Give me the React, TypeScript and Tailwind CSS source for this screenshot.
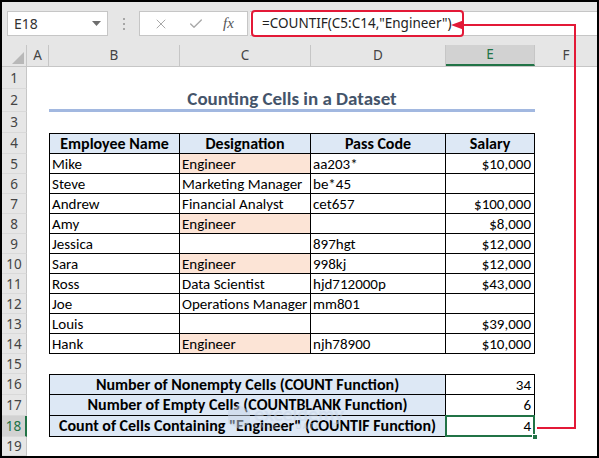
import { X, Check } from 'lucide-react'

type Row = { n: number; h: string; cells?: React.ReactNode }

const cellFont = "font-['Carlito','Lato',sans-serif]"

const people = [
  ['Mike', 'Engineer', 'aa203*', '$10,000'],
  ['Steve', 'Marketing Manager', 'be*45', ''],
  ['Andrew', 'Financial Analyst', 'cet657', '$100,000'],
  ['Amy', 'Engineer', '', '$8,000'],
  ['Jessica', '', '897hgt', '$12,000'],
  ['Sara', 'Engineer', '998kj', '$12,000'],
  ['Ross', 'Data Scientist', 'hjd712000p', '$43,000'],
  ['Joe', 'Operations Manager', 'mm801', ''],
  ['Louis', '', '', '$39,000'],
  ['Hank', 'Engineer', 'njh78900', '$10,000'],
]

const summary = [
  ['Number of Nonempty Cells (COUNT Function)', '34'],
  ['Number of Empty Cells (COUNTBLANK Function)', '6'],
  ['Count of Cells Containing "Engineer" (COUNTIF Function)', '4'],
]

function RowHead({ n, active }: { n: number; active?: boolean }) {
  return (
    <div
      className={`w-[25px] shrink-0 flex items-center justify-center border-b border-b-[#d9d9d9] text-[13.5px] leading-[16px] font-['Noto_Sans',sans-serif] ${
        active
          ? 'bg-[#d2d2d2] text-[#217346] border-r-2 border-r-[#217346]'
          : 'bg-[#e6e6e6] text-[#444] border-r border-r-[#c6c6c6]'
      }`}
    >
      {n}
    </div>
  )
}

function ColHead({ label, w, active }: { label: string; w: string; active?: boolean }) {
  return (
    <div
      className={`${w} shrink-0 flex items-center justify-center border-r border-[#c6c6c6] text-[13.5px] font-['Noto_Sans',sans-serif] ${
        active ? 'bg-[#d2d2d2] text-[#217346] border-b-2 border-b-[#217346]' : 'text-[#444]'
      }`}
    >
      {label}
    </div>
  )
}

export default function App() {
  const rows: Row[] = []

  rows.push({ n: 1, h: 'h-[22px]' })
  rows.push({
    n: 2,
    h: 'h-[23px]',
    cells: (
      <>
        <div className="w-[22px] shrink-0" />
        <div className={`w-[486px] shrink-0 flex items-end justify-center border-b-[3px] border-[#a2b8e0] text-[19px] leading-[20px] font-bold text-[#44546a] ${cellFont}`}>
          Counting Cells in a Dataset
        </div>
      </>
    ),
  })
  rows.push({ n: 3, h: 'h-[21px]' })
  rows.push({
    n: 4,
    h: 'h-[21px]',
    cells: (
      <>
        <div className="w-[22px] shrink-0" />
        {[
          ['Employee Name', 'w-[131px] border-l'],
          ['Designation', 'w-[131px]'],
          ['Pass Code', 'w-[135px]'],
          ['Salary', 'w-[89px]'],
        ].map(([t, w]) => (
          <div
            key={t}
            className={`${w} shrink-0 flex items-center justify-center border-t border-r border-b border-black bg-[#dde8f5] text-[16px] leading-[18px] font-bold text-black ${cellFont}`}
          >
            {t}
          </div>
        ))}
      </>
    ),
  })

  people.forEach((p, i) => {
    rows.push({
      n: 5 + i,
      h: 'h-[20px]',
      cells: (
        <>
          <div className="w-[22px] shrink-0" />
          <div className="w-[131px] shrink-0 flex items-center px-[2px] border-l border-r border-b border-black overflow-hidden whitespace-nowrap">{p[0]}</div>
          <div className={`w-[131px] shrink-0 flex items-center px-[2px] border-r border-b border-black overflow-hidden whitespace-nowrap ${p[1] === 'Engineer' ? 'bg-[#fce4d6]' : ''}`}>{p[1]}</div>
          <div className="w-[135px] shrink-0 flex items-center px-[2px] border-r border-b border-black overflow-hidden whitespace-nowrap">{p[2]}</div>
          <div className="w-[89px] shrink-0 flex items-center justify-end px-[3px] border-r border-b border-black overflow-hidden whitespace-nowrap">{p[3]}</div>
        </>
      ),
    })
  })

  rows.push({ n: 15, h: 'h-[20px]' })

  summary.forEach((s, i) => {
    rows.push({
      n: 16 + i,
      h: 'h-[21px]',
      cells: (
        <>
          <div className="w-[22px] shrink-0" />
          <div className={`w-[397px] shrink-0 flex items-center justify-center border-l border-r border-b border-black bg-[#dde8f5] text-[16px] font-bold whitespace-nowrap ${i === 0 ? 'border-t' : ''}`}>
            {s[0]}
          </div>
          <div className={`relative w-[89px] shrink-0 flex items-center justify-end px-[3px] border-r border-b border-black ${i === 0 ? 'border-t' : ''}`}>
            {s[1]}
            {i === 2 && (
              <>
                <div className="absolute -left-px -top-px w-[90px] h-[22px] border-2 border-[#217346]" />
                <div className="absolute -right-[4px] -bottom-[4px] w-[6px] h-[6px] bg-[#217346] border border-white" />
              </>
            )}
          </div>
        </>
      ),
    })
  })

  rows.push({ n: 19, h: 'h-[19px]' })

  return (
    <div className="relative w-[599px] h-[458px] bg-black p-[2px] overflow-hidden">
      <div className="w-full h-full flex flex-col bg-white">
        {/* Toolbar */}
        <div className="h-[43px] shrink-0 flex items-center bg-[#e6e6e6] pl-[5px] font-['Noto_Sans',sans-serif]">
          <div className="w-[101px] h-[25px] flex items-center justify-between bg-white border border-[#c6c6c6] pl-[6px] pr-[6px] text-[14px] text-[#333]">
            <span>E18</span>
            <svg width="9" height="5" viewBox="0 0 9 5">
              <path d="M0 0 H9 L4.5 5 Z" fill="#6e6e6e" />
            </svg>
          </div>
          <div className="w-[31px] flex flex-col items-center gap-[3px]">
            <span className="w-[2px] h-[2px] bg-[#a6a6a6]" />
            <span className="w-[2px] h-[2px] bg-[#a6a6a6]" />
            <span className="w-[2px] h-[2px] bg-[#a6a6a6]" />
          </div>
          <div className="w-[109px] h-[25px] flex items-center bg-white border border-[#c6c6c6] text-[#a8a8a8]">
            <X size={16} strokeWidth={1.5} className="ml-[13px]" />
            <Check size={16} strokeWidth={2} className="ml-[19px]" />
            <span className="ml-[19px] text-[15px] italic font-['Liberation_Serif',serif] text-[#555]">fx</span>
          </div>
          <div className="flex-1 h-[25px] ml-[2px] flex items-center bg-white border-y border-[#c6c6c6]">
            <div className="h-[27px] w-[213px] ml-[1px] flex items-center rounded-[4px] border-2 border-[#e31937] pl-[9px] text-[13.5px] text-[#222] whitespace-nowrap">
              =COUNTIF(C5:C14,"Engineer")
            </div>
          </div>
        </div>

        {/* Column headers */}
        <div className="h-[22px] shrink-0 flex bg-[#e6e6e6] border-b border-[#c6c6c6]">
          <div className="w-[25px] shrink-0 relative border-r border-[#c6c6c6]">
            <svg className="absolute right-[2px] bottom-[2px]" width="12" height="12" viewBox="0 0 12 12">
              <path d="M12 0 V12 H0 Z" fill="#b8b8b8" />
            </svg>
          </div>
          <ColHead label="A" w="w-[22px]" />
          <ColHead label="B" w="w-[131px]" />
          <ColHead label="C" w="w-[131px]" />
          <ColHead label="D" w="w-[135px]" />
          <ColHead label="E" w="w-[89px]" active />
          <div className="flex-1 flex items-center justify-center text-[13.5px] text-[#444] font-['Noto_Sans',sans-serif]">F</div>
        </div>

        {/* Sheet */}
        <div className={`flex-1 flex flex-col text-[15px] leading-[18px] text-black ${cellFont}`}>
          {rows.map((r) => (
            <div key={r.n} className={`${r.h} shrink-0 flex`}>
              <RowHead n={r.n} active={r.n === 18} />
              {r.cells}
            </div>
          ))}
        </div>
      </div>

      {/* Watermark */}
      <div className="absolute left-[228px] top-[404px] flex items-center gap-[4px] opacity-50 pointer-events-none">
        <svg width="22" height="24" viewBox="0 0 22 24">
          <path d="M11 0 L22 6 V18 L11 24 L0 18 V6 Z" fill="#c9d6e8" />
        </svg>
        <div className="flex flex-col leading-none">
          <span className="text-[19px] font-bold text-[#c9d6e8] font-['Lato',sans-serif]">exceldemy</span>
          <span className="text-[7px] tracking-[2px] text-[#b8c2cf] font-['Lato',sans-serif]">EXCEL · DATA · BI</span>
        </div>
      </div>

      {/* Red arrow */}
      <svg className="absolute inset-0 pointer-events-none" width="599" height="458" viewBox="0 0 599 458">
        <path d="M537 428 H575 V25 H461" fill="none" stroke="#e31937" strokeWidth="2" />
        <path d="M451 25 L463 20.5 L463 29.5 Z" fill="#e31937" />
      </svg>
    </div>
  )
}
